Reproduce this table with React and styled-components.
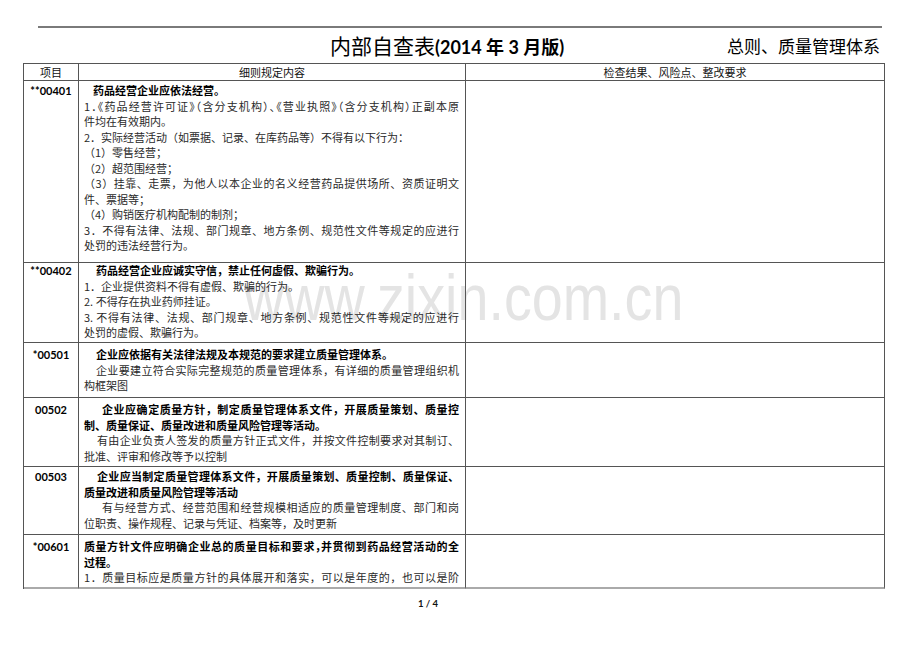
import React from "react";
import styled, { createGlobalStyle } from "styled-components";

const GlobalStyle = createGlobalStyle`
  html, body {
    margin: 0;
    padding: 0;
    background: #fff;
  }
  body {
    font-family: "Noto Sans CJK SC", sans-serif;
    color: #000;
  }
`;

const Page = styled.div`
  position: relative;
  z-index: 0;
  width: 920px;
  height: 651px;
  overflow: hidden;
  background: #fff;
`;

const Rule = styled.div`
  height: 2px;
  margin: 26px 38px 0 38px;
  background: #7a7a7a;
`;

const TitleBar = styled.div`
  display: flex;
  align-items: center;
  justify-content: space-between;
  height: 35px;
  margin: 0 40px 0 23px;
  padding-left: 307px;
  box-sizing: border-box;
`;

const MainTitle = styled.div`
  font-size: 21px;
  line-height: 1;
  white-space: nowrap;
`;

const Edition = styled.span`
  font-family: Lato, "Noto Sans CJK SC", sans-serif;
  font-weight: 700;
  font-size: 18px;
`;

const Section = styled.div`
  font-size: 17px;
  line-height: 1;
  white-space: nowrap;
`;

const Table = styled.div`
  width: 862px;
  margin-left: 23px;
  border-left: 1px solid #555;
  border-top: 1px solid #555;
  box-sizing: border-box;
`;

const Row = styled.div`
  display: grid;
  grid-template-columns: 55px 387px 419px;
  height: ${(p) => p.$h}px;
  overflow: hidden;
`;

const Cell = styled.div`
  box-sizing: border-box;
  border-right: 1px solid #555;
  border-bottom: ${(p) => (p.$last ? "2px solid #aaa" : "1px solid #555")};
  padding-top: ${(p) => p.$pad || 0}px;
`;

const HeadCell = styled(Cell)`
  font-size: 11px;
  line-height: 16px;
  text-align: center;
  color: #111;
`;

const CodeCell = styled(Cell)`
  font-family: Lato, "Liberation Sans", sans-serif;
  font-weight: 700;
  font-size: 11px;
  line-height: 15.5px;
  text-align: center;
`;

const TextCell = styled(Cell)`
  padding-left: 5px;
  padding-right: 6px;
`;

const Line = styled.div`
  font-size: 11px;
  line-height: 15.5px;
  padding-left: ${(p) => p.$indent || 0}px;
  font-weight: ${(p) => (p.$b ? 700 : 400)};
  color: ${(p) => (p.$b ? "#000" : "#2a2a2a")};
  text-align: justify;
  text-align-last: ${(p) => (p.$j ? "justify" : "left")};
  font-feature-settings: ${(p) => (p.$tight ? '"halt"' : "normal")};
`;

const Footer = styled.div`
  margin-top: 9px;
  padding-left: 418px;
  font-family: Lato, "Liberation Sans", sans-serif;
  font-weight: 700;
  font-size: 9.5px;
  color: #111;
`;

const Watermark = styled.div`
  position: absolute;
  z-index: -1;
  left: 244px;
  top: 266px;
  font-family: "Liberation Sans", Arial, sans-serif;
  font-size: 64px;
  line-height: 64px;
  color: #e4e4e4;
  white-space: nowrap;
  transform: scaleX(0.87);
  transform-origin: left top;
  pointer-events: none;
`;

const rows = [
  {
    code: "**00401",
    h: 182,
    pad: 2,
    lines: [
      { t: "药品经营企业应依法经营。", b: true, indent: 9 },
      { t: "1．《药品经营许可证》（含分支机构）、《营业执照》（含分支机构）正副本原", j: true, tight: true },
      { t: "件均在有效期内。" },
      { t: "2．实际经营活动（如票据、记录、在库药品等）不得有以下行为：" },
      { t: "（1）零售经营；" },
      { t: "（2）超范围经营；" },
      { t: "（3）挂靠、走票，为他人以本企业的名义经营药品提供场所、资质证明文", j: true },
      { t: "件、票据等；" },
      { t: "（4）购销医疗机构配制的制剂；" },
      { t: "3．不得有法律、法规、部门规章、地方条例、规范性文件等规定的应进行", j: true },
      { t: "处罚的违法经营行为。" },
    ],
  },
  {
    code: "**00402",
    h: 80,
    pad: 0,
    lines: [
      { t: "药品经营企业应诚实守信，禁止任何虚假、欺骗行为。", b: true, indent: 12 },
      { t: "1．企业提供资料不得有虚假、欺骗的行为。" },
      { t: "2. 不得存在执业药师挂证。" },
      { t: "3. 不得有法律、法规、部门规章、地方条例、规范性文件等规定的应进行", j: true },
      { t: "处罚的虚假、欺骗行为。" },
    ],
  },
  {
    code: "*00501",
    h: 55,
    pad: 4,
    lines: [
      { t: "企业应依据有关法律法规及本规范的要求建立质量管理体系。", b: true, indent: 12 },
      { t: "企业要建立符合实际完整规范的质量管理体系，有详细的质量管理组织机", j: true, indent: 12 },
      { t: "构框架图" },
    ],
  },
  {
    code: "00502",
    h: 69,
    pad: 4,
    lines: [
      { t: "企业应确定质量方针，制定质量管理体系文件，开展质量策划、质量控", b: true, j: true, indent: 18 },
      { t: "制、质量保证、质量改进和质量风险管理等活动。", b: true },
      { t: "有由企业负责人签发的质量方针正式文件，并按文件控制要求对其制订、", j: true, indent: 13 },
      { t: "批准、评审和修改等予以控制" },
    ],
  },
  {
    code: "00503",
    h: 68,
    pad: 2,
    lines: [
      { t: "企业应当制定质量管理体系文件，开展质量策划、质量控制、质量保证、", b: true, j: true, indent: 13 },
      { t: "质量改进和质量风险管理等活动", b: true },
      { t: "有与经营方式、经营范围和经营规模相适应的质量管理制度、部门和岗", j: true, indent: 18 },
      { t: "位职责、操作规程、记录与凭证、档案等，及时更新" },
    ],
  },
  {
    code: "*00601",
    h: 54,
    pad: 4,
    last: true,
    lines: [
      { t: "质量方针文件应明确企业总的质量目标和要求，并贯彻到药品经营活动的全", b: true, j: true, tight: true },
      { t: "过程。", b: true },
      { t: "1．质量目标应是质量方针的具体展开和落实，可以是年度的，也可以是阶", j: true },
    ],
  },
];

export default function App() {
  return (
    <>
      <GlobalStyle />
      <Page>
        <Watermark>www.zixin.com.cn</Watermark>
        <Rule />
        <TitleBar>
          <MainTitle>
            内部自查表<Edition>(2014 年 3 月版)</Edition>
          </MainTitle>
          <Section>总则、质量管理体系</Section>
        </TitleBar>
        <Table>
          <Row $h={17}>
            <HeadCell>项目</HeadCell>
            <HeadCell>细则规定内容</HeadCell>
            <HeadCell>检查结果、风险点、整改要求</HeadCell>
          </Row>
          {rows.map((r) => (
            <Row key={r.code} $h={r.h}>
              <CodeCell $pad={r.pad} $last={r.last}>
                {r.code}
              </CodeCell>
              <TextCell $pad={r.pad} $last={r.last}>
                {r.lines.map((l, i) => (
                  <Line key={i} $b={l.b} $j={l.j} $tight={l.tight} $indent={l.indent}>
                    {l.t}
                  </Line>
                ))}
              </TextCell>
              <Cell $last={r.last} />
            </Row>
          ))}
        </Table>
        <Footer>1 / 4</Footer>
      </Page>
    </>
  );
}
